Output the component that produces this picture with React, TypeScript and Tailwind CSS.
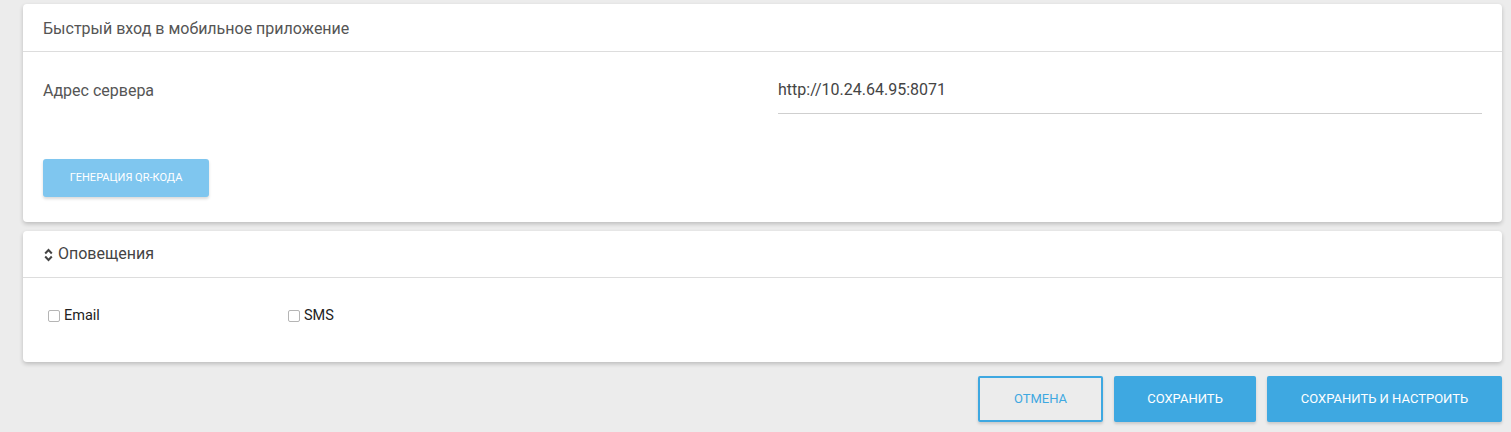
export default function App() {
  return (
    <main className="min-h-[432px] bg-[#ececec] pl-[23px] pr-[9px] pt-[4px] font-['Roboto',sans-serif]">
      {/* QUICK MOBILE LOGIN */}
      <section className="rounded-[4px] bg-white shadow-[0_2px_4px_rgba(0,0,0,0.2)]">
        <div className="flex h-[48px] items-center border-b border-[#dddddd] px-[20px] pt-[2px] text-[16px] text-[#555555]">
          Быстрый вход в мобильное приложение
        </div>
        <div className="px-[20px] pb-[25px]">
          <div className="flex items-start pt-[26px]">
            <label className="w-[735px] pt-[1px] text-[16px] text-[#555555]">Адрес сервера</label>
            <div className="flex-1 border-b border-[#cfcfcf] pb-[11px] text-[16px] text-[#444444]">
              http://10.24.64.95:8071
            </div>
          </div>
          <button className="mt-[45px] h-[38px] w-[166px] rounded-[3px] bg-[#7fc6ef] text-[11px] uppercase text-white shadow-[0_2px_3px_rgba(0,0,0,0.15)]">
            Генерация QR-кода
          </button>
        </div>
      </section>

      {/* NOTIFICATIONS */}
      <section className="mt-[9px] rounded-[4px] bg-white shadow-[0_2px_4px_rgba(0,0,0,0.2)]">
        <div className="flex h-[47px] items-center gap-[5px] border-b border-[#dddddd] pl-[21px] pr-[20px] text-[16px] text-[#444444]">
          <svg width="9" height="14" viewBox="0 0 9 14" className="mt-[1px]">
            <path d="M1.2 5.5 L4.5 2 L7.8 5.5" fill="none" stroke="#444" strokeWidth="2" />
            <path d="M1.2 8.5 L4.5 12 L7.8 8.5" fill="none" stroke="#444" strokeWidth="2" />
          </svg>
          Оповещения
        </div>
        <div className="flex items-center px-[25px] pb-[35px] pt-[27px] text-[14.5px] text-[#222222]">
          <label className="flex w-[240px] items-center gap-[4px]">
            <span className="h-[12px] w-[12px] rounded-[2px] border border-[#b5b5b5] bg-white" />
            Email
          </label>
          <label className="flex items-center gap-[4px]">
            <span className="h-[12px] w-[12px] rounded-[2px] border border-[#b5b5b5] bg-white" />
            SMS
          </label>
        </div>
      </section>

      {/* ACTIONS */}
      <div className="flex justify-end gap-[11px] pt-[14px]">
        <button className="h-[46px] w-[125px] rounded-[2px] border-2 border-[#3ea8e1] text-[13px] uppercase text-[#3ea8e1] shadow-[0_2px_3px_rgba(0,0,0,0.15)]">
          Отмена
        </button>
        <button className="h-[46px] w-[142px] rounded-[2px] bg-[#3ea8e1] text-[13px] uppercase text-white shadow-[0_2px_3px_rgba(0,0,0,0.15)]">
          Сохранить
        </button>
        <button className="h-[46px] w-[235px] rounded-[2px] bg-[#3ea8e1] text-[13px] uppercase text-white shadow-[0_2px_3px_rgba(0,0,0,0.15)]">
          Сохранить и настроить
        </button>
      </div>
    </main>
  );
}
